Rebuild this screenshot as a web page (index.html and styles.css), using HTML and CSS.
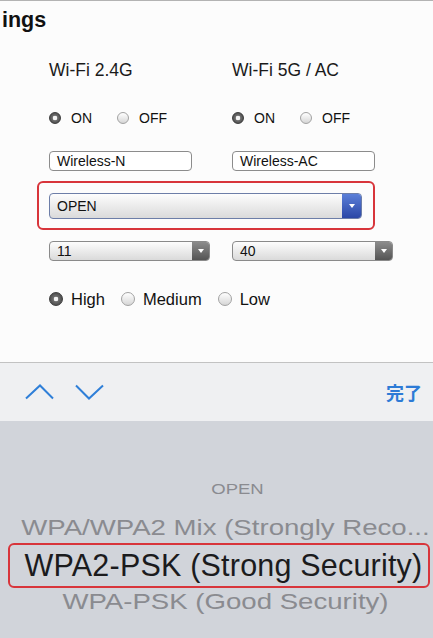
FILE: index.html
```html
<!DOCTYPE html>
<html lang="en">
<head>
  <meta charset="UTF-8" />
  <meta name="viewport" content="width=device-width, initial-scale=1.0" />
  <title>Wireless Settings</title>
  <link rel="stylesheet" href="styles.css">
</head>
<body>
  <div class="page">
    <h1 class="title">ings</h1>

    <div class="bands">
      <div class="band-label">Wi-Fi 2.4G</div>
      <div class="band-label">Wi-Fi 5G / AC</div>

      <div class="switch">
        <span class="radio on"></span><span class="opt">ON</span>
        <span class="radio"></span><span class="opt">OFF</span>
      </div>
      <div class="switch">
        <span class="radio on"></span><span class="opt">ON</span>
        <span class="radio"></span><span class="opt">OFF</span>
      </div>

      <div class="ssid">Wireless-N</div>
      <div class="ssid">Wireless-AC</div>

      <div class="security">
        <div class="select focused">
          <span class="value">OPEN</span>
          <span class="arrow blue"></span>
        </div>
      </div>

      <div class="select channel">
        <span class="value">11</span>
        <span class="arrow"></span>
      </div>
      <div class="select channel">
        <span class="value">40</span>
        <span class="arrow"></span>
      </div>

      <div class="power">
        <span class="radio big on"></span><span class="opt">High</span>
        <span class="radio big"></span><span class="opt">Medium</span>
        <span class="radio big"></span><span class="opt">Low</span>
      </div>
    </div>
  </div>

  <div class="toolbar">
    <svg class="nav" width="80" height="16" viewBox="0 0 80 16">
      <polyline points="1,14.5 15,1.5 28,14.5" />
      <polyline points="51,1.5 64,14.5 78,1.5" />
    </svg>
    <span class="done">完了</span>
  </div>

  <div class="picker">
    <div class="row far first"><span>OPEN</span></div>
    <div class="row near"><span>WPA/WPA2 Mix (Strongly Reco...</span></div>
    <div class="row selected"><span>WPA2-PSK (Strong Security)</span></div>
    <div class="row near below"><span>WPA-PSK (Good Security)</span></div>
    <div class="row far below"><span>WEP (Basic Security)</span></div>
  </div>
</body>
</html>
```

FILE: styles.css
```css
* {
  box-sizing: border-box;
}

body {
  margin: 0;
  width: 433px;
  height: 638px;
  overflow: hidden;
  font-family: "Liberation Sans", Arial, sans-serif;
  background-color: #fcfcfc;
  color: #111;
}

.page {
  height: 362px;
  overflow: hidden;
}

.title {
  height: 40px;
  margin: 0;
  padding: 6px 0 0 2px;
  border-top: 1px solid #b3b3b3;
  font-size: 21.5px;
  line-height: 26px;
  font-weight: bold;
}

.bands {
  display: grid;
  grid-template-columns: 183px 183px;
  padding-left: 49px;
}

.band-label {
  height: 60px;
  display: flex;
  align-items: center;
  font-size: 17.5px;
  color: #1a1a1a;
}

.switch {
  height: 35px;
  display: flex;
  align-items: center;
  font-size: 14px;
}

.radio {
  width: 12px;
  height: 12px;
  flex: none;
  border-radius: 50%;
  border: 1px solid #a2a2a2;
  background: linear-gradient(#ffffff, #d6d6d6);
  margin-right: 10px;
}

.radio.on {
  border-color: #3c3c3c;
  background: radial-gradient(circle, #f4f4f4 0 2px, #6e6e6e 2.6px, #3a3a3a 100%);
}

.switch .opt {
  margin-right: 25px;
}

.switch .opt:last-child {
  margin-right: 0;
}

.ssid {
  width: 143px;
  height: 20px;
  margin-top: 16px;
  padding-left: 7px;
  border: 1px solid #8c8c8c;
  border-radius: 4px;
  background: #fff;
  font-size: 14px;
  line-height: 18px;
}

.security {
  grid-column: 1 / -1;
  width: 338px;
  height: 49px;
  margin: 10px 0 0 -12px;
  padding: 10px 11px 9px 10px;
  border: 2px solid #d8353b;
  border-radius: 6px;
}

.select {
  display: flex;
  align-items: stretch;
  border: 1px solid #8a8a8a;
  border-radius: 4px;
  background: linear-gradient(#fdfdfd, #dadada);
  font-size: 14px;
  overflow: hidden;
}

.select .value {
  flex: 1;
  display: flex;
  align-items: center;
  padding-left: 7px;
}

.select .arrow {
  width: 17px;
  display: flex;
  align-items: center;
  justify-content: center;
  background: linear-gradient(#8c8c8c, #545454);
}

.select .arrow::after {
  content: "";
  border-left: 3px solid transparent;
  border-right: 3px solid transparent;
  border-top: 4px solid #fff;
}

.select.focused {
  height: 26px;
  border-color: #6d7ea8;
}

.select .arrow.blue {
  width: 19px;
  background: linear-gradient(#5b7fd8, #2b47a6);
}

.select.channel {
  width: 161px;
  height: 20px;
  margin-top: 11px;
}

.power {
  grid-column: 1 / -1;
  height: 36px;
  margin-top: 20px;
  display: flex;
  align-items: center;
  font-size: 16.5px;
}

.radio.big {
  width: 14px;
  height: 14px;
  margin-right: 8px;
}

.power .opt {
  margin-right: 16px;
}

.toolbar {
  height: 59px;
  display: flex;
  align-items: center;
  justify-content: space-between;
  padding: 0 11px 0 25px;
  border-top: 1px solid #c2c2c2;
  background: #eff0f2;
}

.nav {
  margin-top: -1px;
}

.nav polyline {
  fill: none;
  stroke: #2f7fd8;
  stroke-width: 2;
}

.done {
  font-family: "Noto Sans CJK JP", sans-serif;
  font-weight: bold;
  font-size: 18px;
  color: #2d7bd6;
}

.picker {
  height: 217px;
  padding: 49px 0 0 18px;
  background: #d1d4da;
  overflow: hidden;
  display: flex;
  flex-direction: column;
}

.row {
  flex: none;
  display: flex;
  align-items: center;
  justify-content: center;
  color: #8a8b90;
  white-space: nowrap;
}

.row.far {
  height: 38px;
  font-size: 19.5px;
}

.row.far span {
  transform: scaleY(0.75);
}

.row.first {
  padding-left: 24px;
  font-size: 18.5px;
}

.row.first span {
  transform: scaleY(0.82);
}

.row.near {
  height: 35px;
  padding-top: 4px;
  font-size: 27.6px;
}

.row.near span {
  transform: scaleY(0.78);
}

.row.below.near {
  height: 26px;
  padding-top: 2px;
}

.row.below.far {
  height: 54px;
  padding-top: 24px;
  font-size: 22px;
}

.row.selected {
  width: 422px;
  height: 45px;
  margin: 0 3px 0 -10px;
  padding-left: 9px;
  border: 2px solid #d8353b;
  border-radius: 6px;
  font-size: 30.5px;
  letter-spacing: 0.2px;
  color: #1b1b1d;
}
```
